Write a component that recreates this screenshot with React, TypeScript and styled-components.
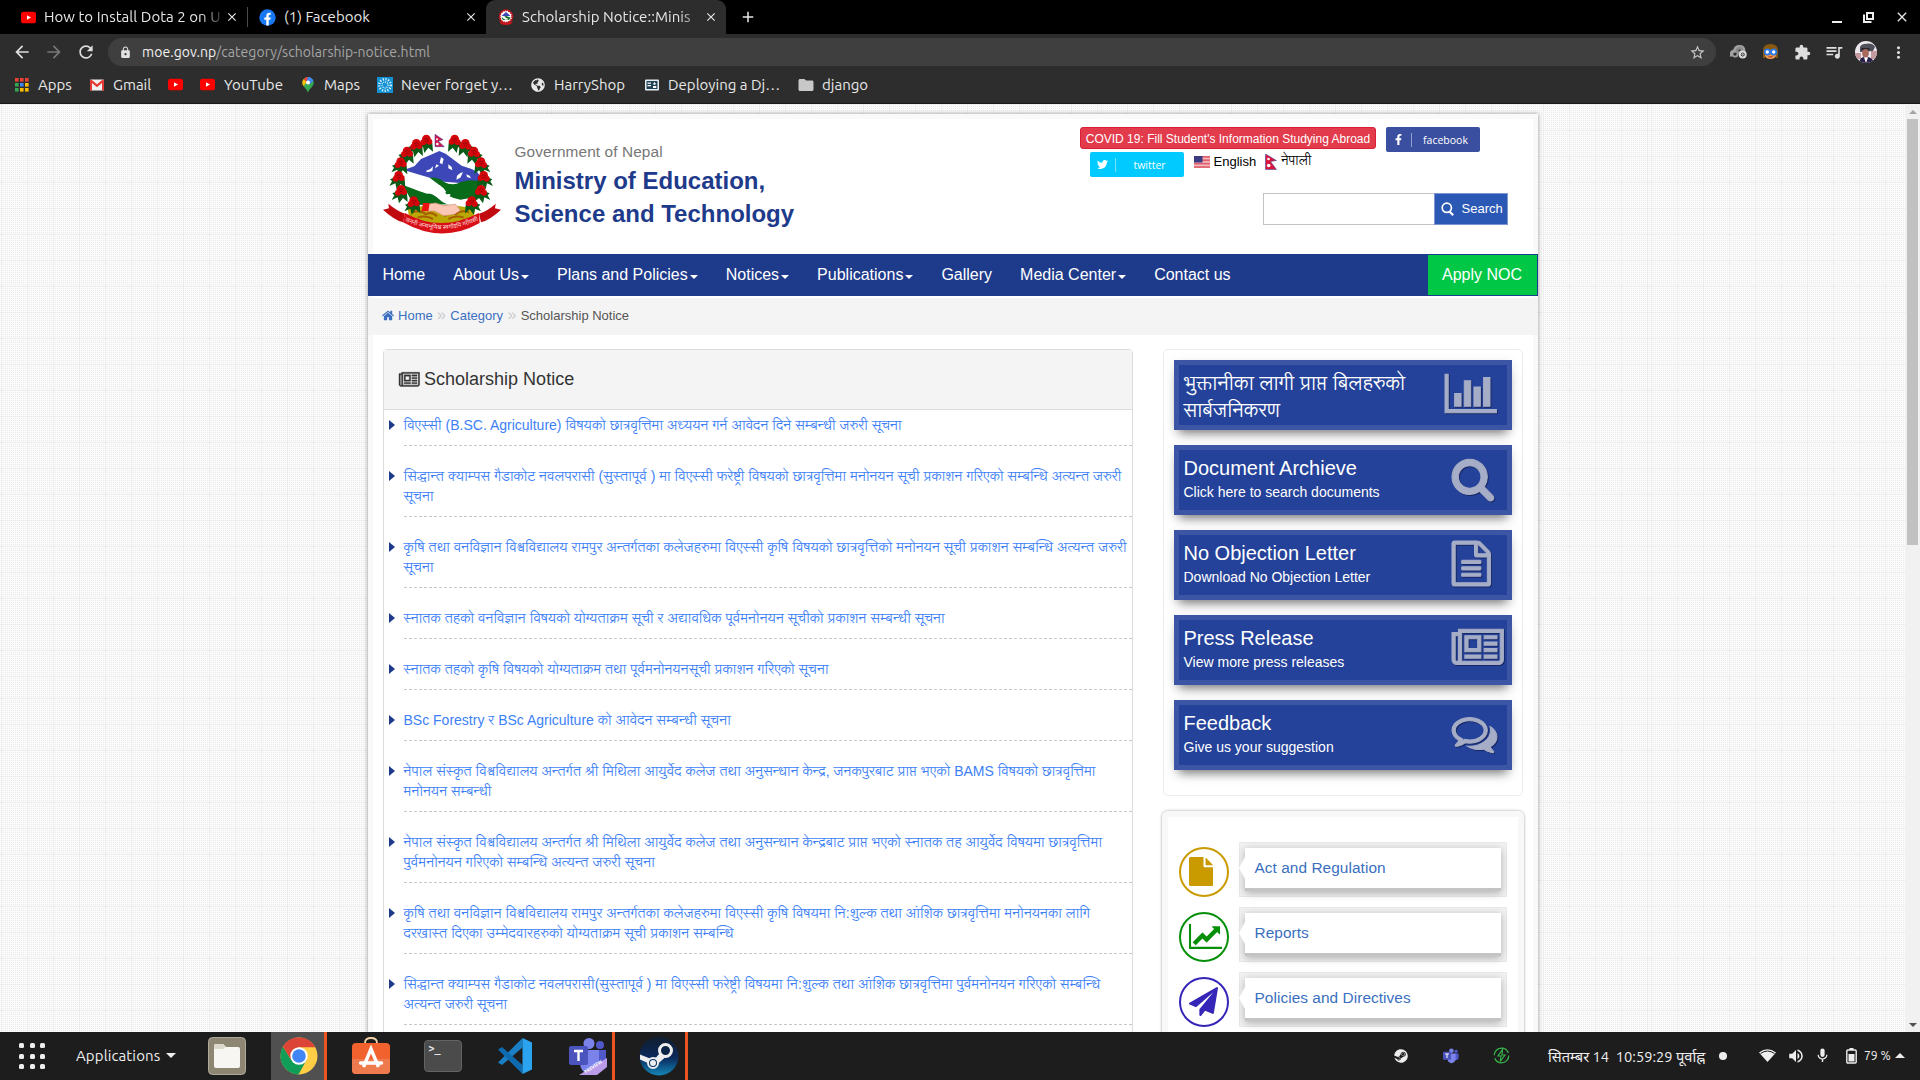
import React from "react";
import styled, { createGlobalStyle, css } from "styled-components";
import { FaTwitter, FaFacebookF, FaGlobeAmericas, FaSteam } from "react-icons/fa";
import {
  MdArrowBack, MdArrowForward, MdRefresh, MdLock, MdStarBorder, MdExtension,
  MdQueueMusic, MdMoreVert, MdClose, MdAdd, MdFolder, MdMic, MdVolumeUp,
} from "react-icons/md";

const Global = createGlobalStyle`
  html, body { margin: 0; padding: 0; background: #fff; overflow: hidden; }
  * { box-sizing: border-box; }
`;
const ui = `"Ubuntu", "Noto Sans", "Noto Sans Devanagari", sans-serif`;
const arial = `"Liberation Sans", Arial, "Lohit Devanagari", "Noto Sans Devanagari", sans-serif`;

const Screen = styled.div`
  width: 1920px; height: 1080px; display: flex; flex-direction: column; overflow: hidden; font-family: ${ui};
  svg { display: block; flex: none; }
`;

/* ---------- browser chrome ---------- */
const TabStrip = styled.div`height: 34px; background: #000; display: flex; align-items: stretch; color: #e6e6e6;`;
const Tab = styled.div<{ $w: number; $active?: boolean; $pl: number }>`
  width: ${p => p.$w}px; display: flex; align-items: center; padding: 0 8px 0 ${p => p.$pl}px; gap: 8px;
  ${p => p.$active && css`background: #2d2d2d; border-radius: 9px 9px 0 0;`}
`;
const TabTitle = styled.div<{ $fade?: boolean }>`
  flex: 1; white-space: nowrap; font-size: 15px; line-height: 20px; margin-right: -8px; letter-spacing: .04px;
  ${p => p.$fade && css`mask-image: linear-gradient(90deg, #000 86%, rgba(0,0,0,.15) 99%);`}
`;
const TabLine = styled.div`width: 1px; height: 20px; background: #4a4a4a; align-self: center;`;
const NewTab = styled.div`width: 44px; display: flex; align-items: center; justify-content: center;`;
const WindowButtons = styled.div`margin-left: auto; width: 89px; display: flex; align-items: center; gap: 20px;`;

const Toolbar = styled.div`height: 36px; background: #2d2d2d; display: flex; align-items: center; color: #dedede; padding-left: 12px;`;
const NavIcons = styled.div`display: flex; gap: 12px; width: 96px;`;
const Omnibox = styled.div`
  width: 1608px; height: 28px; border-radius: 14px; background: #3f3f3f; display: flex; align-items: center; padding: 0 10px 0 11px;
  font-size: 14px; color: #a5a5a5;
`;
const Url = styled.div`margin-left: 10px; flex: 1; letter-spacing: 0.06px; b { font-weight: 400; color: #f0f0f0; }`;
const Extensions = styled.div`display: flex; align-items: center; margin-left: 6px;`;
const ExtCell = styled.div`width: 32px; display: flex; justify-content: center;`;
const Avatar = styled.div`width: 22px; height: 22px; border-radius: 50%; overflow: hidden;`;

const Bookmarks = styled.div`
  height: 34px; background: #2d2d2d; border-bottom: 1px solid #1b181c; display: flex; align-items: center; color: #e8e8e8; padding: 0 0 4px 15px;
`;
const Bookmark = styled.div<{ $w: number; $gap?: number }>`
  width: ${p => p.$w}px; display: flex; align-items: center; gap: ${p => p.$gap ?? 9}px; font-size: 15px; white-space: nowrap;
`;

/* ---------- page ---------- */
const Viewport = styled.div`
  height: 928px; display: flex; overflow: hidden; font-family: ${arial};
`;
const Page = styled.div`
  flex: 1; height: 928px; padding: 10px 0 0 367.5px; overflow: hidden; background-color: #fbfbfb;
  background-image:
    repeating-linear-gradient(90deg, transparent 0 1px, #ededed 1px 2px, transparent 2px 26px),
    repeating-linear-gradient(180deg, #ededed 0 1px, transparent 1px 26px),
    conic-gradient(#ebebeb 25%, transparent 0);
  background-size: 550px 594px, 550px 594px, 2px 2px;
`;
const Wrapper = styled.div`
  width: 1170px; height: 1400px; background: #fff; border: 5px solid #f9f9f9; box-shadow: 0 0 4px rgba(0,0,0,.42);
`;
const Header = styled.div`height: 135px; display: flex; padding: 8px 25px 0 10px;`;
const EmblemBox = styled.div`padding-top: 7px; width: 132px;`;
const Titles = styled.div`padding-top: 15px; width: 565px;`;
const Gov = styled.div`font-size: 15.4px; color: #777; line-height: 20px; letter-spacing: .1px;`;
const Ministry = styled.div`font-size: 24px; font-weight: 700; color: #1e3a8a; line-height: 33px; margin-top: 2px;`;
const HeaderRight = styled.div`flex: 1; display: flex; flex-direction: column;`;
const Line = styled.div<{ $pl?: number }>`display: flex; height: 25px; align-items: flex-start; padding-left: ${p => p.$pl ?? 0}px;`;
const Covid = styled.div`
  width: 296px; height: 22px; background: #e23b4b; border: 1px solid #dc1f37; border-radius: 3px; color: #fff; font-size: 12px;
  line-height: 22px; text-align: center; white-space: nowrap; margin-right: 10px; padding-left: 1px;
`;
const Social = styled.div<{ $bg: string }>`
  width: 94px; height: 25px; background: ${p => p.$bg}; border-radius: 2px; color: #fff; display: flex; align-items: center;
  padding-left: 7px; font: 500 10.5px "Open Sans", "Noto Sans", sans-serif;
  span { flex: 1; text-align: center; border-left: 1px solid rgba(255,255,255,.45); height: 14px; line-height: 14px; margin-left: 7px; }
`;
const Lang = styled.div<{ $ml: number }>`display: flex; align-items: center; gap: 4px; margin-left: ${p => p.$ml}px; font-size: 13px; color: #000; height: 19px;`;
const SearchRow = styled.div`display: flex; margin: 16px 0 0 auto; height: 32px;`;
const SearchInput = styled.div`width: 171px; background: #fff; border: 1px solid #c3c3c3; border-right: 0;`;
const SearchButton = styled.div`
  width: 74px; background: #2b57b5; border: 1px solid #7c97cf; color: #fff; display: flex; align-items: center; padding: 0 0 1px 6px; gap: 8px; font-size: 13px;
`;

const Nav = styled.div`
  height: 42px; margin: 0 -5px; background: #1e3a8a; display: flex; align-items: center; color: #fff; font-size: 16px; padding: 1px;
`;
const NavItem = styled.div`display: flex; align-items: center; padding: 0 14px; gap: 2px; white-space: nowrap;`;
const Caret = styled.div`border: 4px solid transparent; border-top-color: #fff; border-bottom: 0; margin-top: 3px;`;
const Apply = styled.div`margin-left: auto; width: 109px; height: 40px; background: #00c846; display: flex; align-items: center; justify-content: center;`;

const Crumbs = styled.div`
  height: 37px; margin: 2px -5px 0; background: #f4f4f4; display: flex; align-items: center; padding: 0 0 2px 14.5px; font-size: 13px; color: #555;
  a { color: #3a6fc0; }
  i { font-style: normal; color: #ccc; width: 17.6px; text-align: center; font-size: 16px; line-height: 12px; margin-top: -1px; }
  svg { margin-right: 4px; }
`;
const Columns = styled.div`display: flex; padding: 14px 0 0 10px; align-items: flex-start;`;
const Panel = styled.div`width: 750px; height: 1200px; border: 1px solid #dcdcdc; border-radius: 4px 4px 0 0;`;
const PanelHead = styled.div`
  height: 60px; background: #f4f4f4; border-bottom: 1px solid #dcdcdc; display: flex; align-items: center; padding-left: 15px; gap: 5px;
  font-size: 18px; color: #333;
  svg { overflow: visible; stroke: currentColor; stroke-width: 40px; }
`;
const List = styled.div`padding: 5px 0 0 5px;`;
const Item = styled.div`display: flex; align-items: flex-start; margin-bottom: 20px;`;
const Bullet = styled.div`border: 5px solid transparent; border-left: 6px solid #1e3a8a; border-right: 0; margin: 5px 9px 0 0;`;
const ItemText = styled.div`
  flex: 1; border-bottom: 1px dashed #c8c8c8; padding-bottom: 10px; font-size: 14px; line-height: 20px; color: #3d7ff7; white-space: nowrap;
`;

const Side = styled.div`margin-left: 29px; display: flex; flex-direction: column; gap: 15px;`;
const CardsBox = styled.div`
  width: 360px; height: 447px; margin-left: 1px; border: 1px solid #ececec; border-radius: 5px; padding: 10px 10px; display: flex; flex-direction: column; gap: 15px;
`;
const Card = styled.div`
  height: 70px; width: 338px; background: #24429a; border: 5px solid #3c56a5; box-shadow: 0 8px 10px -5px rgba(0,0,0,.5), 0 2px 10px rgba(0,0,0,.08);
  display: flex; color: #fff; padding: 3px 0 0 5px;
`;
const CardText = styled.div<{ $w: number }>`width: ${p => p.$w}px;`;
const CardTitle = styled.div<{ $np?: boolean }>`font-size: 20px; line-height: ${p => (p.$np ? 27 : 28)}px; white-space: nowrap; margin-top: ${p => (p.$np ? 2 : 1)}px;`;
const CardSub = styled.div`font-size: 14px; line-height: 20px;`;
const CardIcon = styled.div`
  padding: 2.5px 0 0 .5px; color: #a6adc6;
  svg { overflow: visible; stroke: currentColor; stroke-width: 40px; filter: drop-shadow(1px 1px 0 rgba(20,30,80,.7)); }
`;

const LinksBox = styled.div`
  width: 362px; height: 400px; border: 6px solid #f8f8f8; border-radius: 6px; box-shadow: 0 0 3px rgba(0,0,0,.38);
  padding: 25px 0 0 11px; display: flex; flex-direction: column; gap: 10px;
`;
const LinkRow = styled.div`display: flex; align-items: flex-start; gap: 10px; height: 55px;`;
const Circle = styled.div<{ $c: string }>`
  width: 50px; height: 50px; border-radius: 50%; border: 2px solid ${p => p.$c}; color: ${p => p.$c}; padding: 8px 0 0 8px; margin-top: 5px;
`;
const LinkFrame = styled.div`width: 268px; height: 55px; background: #f1f1f1; border: 1px solid #e9e9e9; padding: 5px; position: relative;`;
const Notch = styled.div`position: absolute; left: -1px; top: 14px; border: 11px solid transparent; border-left: 0; border-right: 6px solid #fff;`;
const LinkCard = styled.div`
  height: 43px; background: #fff; border-bottom: 3px solid #c4c4c4; box-shadow: 0 2px 8px rgba(0,0,0,.28); font-size: 15.4px; line-height: 40px;
  padding-left: 10px; color: #3a6fc0; letter-spacing: .06px;
`;

const Scrollbar = styled.div`width: 15px; background: #f1f1f1; display: flex; flex-direction: column; align-items: center;`;
const Arrow = styled.div<{ $down?: boolean }>`
  height: 15px; display: flex; align-items: center;
  &::before { content: ""; border: 4px solid transparent; ${p => p.$down ? "border-top-color:#505050;border-bottom:0;" : "border-bottom-color:#a3a3a3;border-top:0;"} }
`;
const Thumb = styled.div`width: 11px; height: 426px; background: #c1c1c1; margin-bottom: auto;`;

/* ---------- taskbar ---------- */
const Taskbar = styled.div`height: 48px; background: #1d1d1d; display: flex; align-items: center; color: #eee; padding-left: 19px;`;
const DotGrid = styled.div`
  width: 27px; display: grid; grid-template-columns: repeat(3, 5px); gap: 5.5px;
  i { width: 5px; height: 5px; border-radius: 1.5px; background: #eee; }
`;
const AppsLabel = styled.div`
  margin-left: 30px; width: 107px; display: flex; align-items: center; gap: 6px; font-size: 15px; letter-spacing: .12px; padding-bottom: 1px;
`;
const Down = styled.div<{ $up?: boolean }>`border: 5px solid transparent; ${p => p.$up ? "border-bottom-color:#eee;border-top:0;" : "border-top-color:#eee;border-bottom:0;"}`;
const Launcher = styled.div<{ $w: number; $run?: boolean; $active?: boolean; $pl?: number }>`
  width: ${p => p.$w}px; height: 48px; display: flex; align-items: center; justify-content: center; padding-left: ${p => p.$pl ?? 0}px;
  background: ${p => (p.$active ? "#505050" : "transparent")}; border-right: 3px solid ${p => (p.$run ? "#e95420" : "transparent")};
`;
const Tray = styled.div`margin-left: auto; display: flex; align-items: center; padding: 0 15px 1px 0;`;
const TrayCell = styled.div<{ $w: number }>`width: ${p => p.$w}px; white-space: nowrap; font-size: 14.67px;`;
const Percent = styled.div`width: 31px; font-size: 12.2px; white-space: nowrap;`;

/* ---------- glyphs ---------- */
const GLYPHS: Record<string, [number, string]> = {
  bars: [2048, "M640 896v512h-256v-512h256zm384-512v1024h-256v-1024h256zm1024 1152v128h-2048v-1536h128v1408h1920zm-640-896v768h-256v-768h256zm384-384v1152h-256v-1152h256z"],
  search: [1664, "M1152 832q0-185-131.5-316.5t-316.5-131.5-316.5 131.5-131.5 316.5 131.5 316.5 316.5 131.5 316.5-131.5 131.5-316.5zm512 832q0 52-38 90t-90 38q-54 0-90-38l-343-342q-179 124-399 124-143 0-273.5-55.5t-225-150-150-225-55.5-273.5 55.5-273.5 150-225 225-150 273.5-55.5 273.5 55.5 225 150 150 225 55.5 273.5q0 220-124 399l343 343q37 37 37 90z"],
  doc: [1536, "M1468 380q28 28 48 76t20 88v1152q0 40-28 68t-68 28h-1344q-40 0-68-28t-28-68v-1600q0-40 28-68t68-28h896q40 0 88 20t76 48zm-444-244v376h376q-10-29-22-41l-313-313q-12-12-41-22zm384 1528v-1024h-416q-40 0-68-28t-28-68v-416h-768v1536h1280zm-1024-864q0-14 9-23t23-9h704q14 0 23 9t9 23v64q0 14-9 23t-23 9h-704q-14 0-23-9t-9-23v-64zm736 224q14 0 23 9t9 23v64q0 14-9 23t-23 9h-704q-14 0-23-9t-9-23v-64q0-14 9-23t23-9h704zm0 256q14 0 23 9t9 23v64q0 14-9 23t-23 9h-704q-14 0-23-9t-9-23v-64q0-14 9-23t23-9h704z"],
  news: [2048, "M1024 512h-384v384h384v-384zm128 640v128h-640v-128h640zm0-768v640h-640v-640h640zm640 768v128h-512v-128h512zm0-256v128h-512v-128h512zm0-256v128h-512v-128h512zm0-256v128h-512v-128h512zm-1536 960v-960h-128v960q0 26 19 45t45 19 45-19 19-45zm1664 0v-1088h-1536v1088q0 33-11 64h1483q26 0 45-19t19-45zm128-1216v1216q0 80-56 136t-136 56h-1664q-80 0-136-56t-56-136v-1088h256v-128h1792z"],
  chat: [1792, "M704 384q-153 0-286 52t-211.5 141-78.5 191q0 82 53 158t149 132l97 56-35 84q34-20 62-39l44-31 53 10q78 14 153 14 153 0 286-52t211.5-141 78.5-191-78.5-191-211.5-141-286-52zm0-128q191 0 353.5 68.5t256.5 186.5 94 257-94 257-256.5 186.5-353.5 68.5q-86 0-176-16-124 88-278 128-36 9-86 16h-3q-11 0-20.5-8t-11.5-21q-1-3-1-6.5t.5-6.5 2-6l2.5-5 3.5-5.5 4-5 4.5-5 4-4.5q5-6 23-25t26-29.5 22.5-29 25-38.5 20.5-44q-124-72-195-177t-71-224q0-139 94-257t256.5-186.5 353.5-68.5zm822 1169q10 24 20.5 44t25 38.5 22.5 29 26 29.5 23 25q1 1 4 4.5t4.5 5 4 5 3.500 5.500l2.500 5 2 6 .5 6.500-1 6.500q-3 14-13 22t-22 7q-50-7-86-16-154-40-278-128-90 16-176 16-271 0-472-132 58 4 88 4 161 0 309-45t264-129q125-92 192-212t67-254q0-77-23-152 129 71 204 178t75 230q0 120-71 224.500t-195 176.500z"],
  line: [2048, "M2048 1536v128h-2048v-1536h128v1408h1920zm-128-1248v435q0 21-19.500 29.500t-35.500-7.500l-121-121-633 633q-10 10-23 10t-23-10l-233-233-416 416-192-192 585-585q10-10 23-10t23 10l233 233 464-464-121-121q-16-16-7.500-35.500t29.500-19.500h435q14 0 23 9t9 23z"],
  plane: [1792, "M1764 11q33 24 27 64l-256 1536q-5 29-32 45-14 8-31 8-11 0-24-5l-453-185-242 295q-18 23-49 23-13 0-22-4-19-7-30.500-23.500t-11.500-36.500v-349l864-1059-1069 925-395-162q-37-14-40-55-2-40 32-59l1664-960q15-9 32-9 20 0 36 11z"],
  file: [1536, "M1024 512v-472q22 14 36 28l408 408q14 14 28 36h-472zm-128 32q0 40 28 68t68 28h544v1056q0 40-28 68t-68 28h-1344q-40 0-68-28t-28-68v-1600q0-40 28-68t68-28h800v544z"],
  home: [1664, "M1408 992v480q0 26-19 45t-45 19h-384v-384h-256v384h-384q-26 0-45-19t-19-45v-480q0-1 .5-3t.5-3l575-474 575 474q1 2 1 6zm223-69l-62 74q-8 9-21 11h-3q-13 0-21-7l-692-577-692 577q-12 8-24 7-13-2-21-11l-62-74q-8-10-7-23.5t11-21.5l719-599q32-26 76-26t76 26l244 204v-195q0-14 9-23t23-9h192q14 0 23 9t9 23v408l219 182q10 8 11 21.5t-7 23.5z"],
};
const Glyph = ({ name, size, color = "currentColor" }: { name: string; size: number; color?: string }) => {
  const [w, d] = GLYPHS[name];
  return <svg width={(w * size) / 1792} height={size} viewBox={`0 0 ${w} 1792`} fill={color}><path d={d} /></svg>;
};

const flowers: [number, number][] = [
  [148, 44], [118, 57], [90, 80], [71, 112], [65, 153], [72, 195], [110, 229],
  [233, 44], [265, 57], [291, 80], [312, 112], [320, 153], [312, 195], [284, 229],
];
const Emblem = ({ w = 118, h = 100 }: { w?: number; h?: number }) => (
  <svg width={w} height={h} viewBox="18 27 354 300">
    <path d="M80 135 L112 124 L132 102 L160 90 L187 78 L206 86 L230 104 L254 122 L284 132 L300 140 L318 165 L300 178 L200 170 L130 150 Z" fill="#3d47b8" />
    <path d="M192 96l8 6-4 16-8-4zM146 138l14-6 8-8-2 14-14 4zM214 118l10 8 2 10-12-6zM240 152l10-8 8-2-8 16-12 6zM268 148l10 4 4 8-12-4zM178 118l8 4-12 8z" fill="#fff" />
    <path d="M158 158 Q182 156 200 170 Q226 184 250 172 Q280 160 316 170 L310 215 L262 236 L218 216 L200 190 Z" fill="#076b1a" />
    <path d="M78 180 Q120 196 150 206 L216 200 L224 238 L110 240 Z" fill="#076b1a" />
    <path d="M96 180 Q112 164 128 158 Q146 150 152 166 Q166 182 188 180 Q204 196 208 208 Q226 204 218 214 Q232 222 250 224 L284 218 L276 244 L236 240 Q206 242 190 226 Q168 204 140 202 Q112 196 96 180Z" fill="#fff" />
    <path d="M92 250 Q190 232 294 250 L290 288 Q190 318 98 288 Z" fill="#b9a806" />
    <path d="M106 262q26-8 40 6q18-10 34 6M276 262q-26-8-40 6q-18-10-34 6M122 278q24-8 46 4M260 278q-24-8-46 4" fill="none" stroke="#a85d00" strokeWidth="6" />
    <path d="M150 238 L176 234 L200 242 L236 238 L250 256 L232 268 L200 272 L172 258 L150 258Z" fill="#fbc7b5" stroke="#d98f7c" strokeWidth="2" />
    <path d="M138 234h20l-4 24h-20z" fill="#e11" />
    {flowers.map(([x, y], i) => {
      const s = x < 190 ? -1 : 1;
      return (
        <g key={i}>
          <path d={`M${x} ${y}l${s * 26} 10l${-s * 6} 6l${s * 8} 14l${-s * 18} -8l${-s * 4} 18l${-s * 12} -16l${-s * 14} 12l${s * 2} -26z`} fill="#0a5a18" />
          <circle cx={x} cy={y - 2} r="13" fill="#d3060c" />
          <circle cx={x + s * 9} cy={y + 8} r="9" fill="#d3060c" />
          <circle cx={x - s * 9} cy={y + 6} r="9" fill="#d3060c" />
          <path d={`M${x - 7} ${y}q7-8 14 0M${x - 4} ${y + 6}q5-5 9 0`} stroke="#8d0308" strokeWidth="2.5" fill="none" />
        </g>
      );
    })}
    <path d="M174 28 L198 44 L184 49 L202 65 L174 65Z" fill="#d5174e" stroke="#35318f" strokeWidth="1.5" />
    <circle cx="181" cy="57" r="4" fill="#fff" /><circle cx="180" cy="43" r="3" fill="#fff" />
    <path d="M18 254 L36 250 L34 236 Q60 258 84 266 L78 292 Q50 284 18 254Z" fill="#c10a10" />
    <path d="M372 254 L354 250 L356 236 Q332 258 306 266 L312 292 Q340 284 372 254Z" fill="#c10a10" />
    <path d="M84 264 Q190 324 306 264 L308 294 Q194 358 78 292Z" fill="#d80f16" />
    <defs><path id="ribbon" d="M84 288 Q194 338 304 286" /></defs>
    <text fontSize="18" fill="#ffdada" fontFamily="Noto Sans Devanagari, sans-serif" textAnchor="middle">
      <textPath href="#ribbon" startOffset="50%">जननी जन्मभूमिश्च स्वर्गादपि गरीयसी</textPath>
    </text>
  </svg>
);
const EmblemMini = () => (
  <svg width="16" height="16" viewBox="0 0 16 16">
    <circle cx="8" cy="7.500" r="6.300" fill="#fff" stroke="#c5141b" strokeWidth="2" strokeDasharray="2 .6" />
    <path d="M3.500 7L8 3l4.500 4z" fill="#3d47b8" /><path d="M3.500 8.500L8 7l4.500 1.500L11 11H5z" fill="#0a6a1d" />
    <path d="M4 8q3-1.500 4 1l3 1-3 1q-3-1-4-3z" fill="#fff" /><path d="M1 12q7 4 14 0l-2 3q-5 2-10 0z" fill="#d0141b" />
  </svg>
);

const YouTube = ({ s = 15 }: { s?: number }) => (
  <svg width={s} height={s} viewBox="0 0 15 15"><rect y="1.700" width="15" height="11.600" rx="2.600" fill="#f00" /><path d="M6 5.200v4.600l4-2.300z" fill="#fff" /></svg>
);
const FbRound = () => (
  <svg width="17" height="17" viewBox="0 0 17 17"><circle cx="8.5" cy="8.5" r="8.2" fill="#1877f2" />
    <path d="M7.3 16.6v-5.9H5.3V8.4h2V6.7c0-2 1.2-3 3-3 .8 0 1.5.1 1.5.1v1.9h-.9c-.9 0-1.2.6-1.2 1.1v1.6h2.1l-.4 2.3H9.700v5.900z" fill="#fff" /></svg>
);
const AppsGrid = () => (
  <svg width="14" height="14" viewBox="0 0 14 14">
    {["#ea4335", "#ea4335", "#ea4335", "#34a853", "#4285f4", "#fbbc05", "#34a853", "#fbbc05", "#fbbc05"].map((c, i) => (
      <rect key={i} x={(i % 3) * 5} y={Math.floor(i / 3) * 5} width="3.6" height="3.6" fill={c} />
    ))}
  </svg>
);
const Gmail = () => (
  <svg width="14" height="14" viewBox="0 0 14 14"><rect y="1.500" width="14" height="11" rx="1" fill="#f2f2f2" />
    <path d="M0 2.500V12.500H2V5l5 4.200L12 5v7.500h2V2.500L12.800 1.500 7 6.200 1.200 1.500z" fill="#e53935" /></svg>
);
const MapsPin = () => (
  <svg width="12" height="16" viewBox="0 0 12 16">
    <path d="M6 16C5.500 12 .3 9.800.3 5.700A5.700 5.700 0 0 1 6 0a5.700 5.700 0 0 1 5.700 5.700C11.700 9.800 6.500 12 6 16z" fill="#34a853" />
    <path d="M.3 5.700A5.700 5.700 0 0 1 1.700 2l3 2.700L1.800 9C.9 8 .3 7 .3 5.700z" fill="#fbbc04" />
    <path d="M1.600 2.100A5.700 5.700 0 0 1 6 0v3.500L4.500 5z" fill="#ea4335" />
    <path d="M6 0a5.700 5.700 0 0 1 5.400 3.900L7 7.500 4.500 4.500z" fill="#4285f4" /><circle cx="6" cy="5.600" r="2" fill="#fff" />
  </svg>
);
const Burst = () => (
  <svg width="16" height="16" viewBox="0 0 16 16"><rect width="16" height="16" fill="#1292d4" />
    <circle cx="8" cy="8" r="5.800" fill="none" stroke="#d9f1fb" strokeWidth="2.400" strokeDasharray="1.200 1.500" />
    <circle cx="8" cy="8" r="3" fill="none" stroke="#d9f1fb" strokeWidth="1.400" strokeDasharray="1 1" /></svg>
);
const DocMark = () => (
  <svg width="14" height="14" viewBox="0 0 14 14"><rect y="1.500" width="14" height="11" rx="1" fill="#e8f0f5" />
    <rect x="1.500" y="3" width="11" height="8" fill="#1f4257" /><path d="M2.500 4.500h3.500v1.300H2.500zM2.500 7h3.500v1.300H2.500zM9.500 4l1.500 2-1.500 1L8 6zM8 8h3.300v2H8z" fill="#fff" /></svg>
);
const Restore = () => (
  <svg width="11" height="11" viewBox="0 0 11 11" fill="none" stroke="#eee" strokeWidth="2"><rect x="4" y="1" width="6" height="6" /><path d="M1 2.500V10H8.500" /></svg>
);
const ExtGears = () => (
  <svg width="17" height="14" viewBox="0 0 17 14" fill="none" stroke="#a0a0a0">
    <path d="M1.500 11.500Q0 6 4.500 6q.5-4.500 5-4.500T14 6" strokeWidth="2.800" /><circle cx="5" cy="9" r="2.600" strokeWidth="1.800" /><circle cx="9.500" cy="5.500" r="2.200" stroke="#8a8a8a" strokeWidth="2.400" /><circle cx="12.700" cy="9.500" r="3" stroke="#dcdcdc" strokeWidth="2" /><circle cx="12.700" cy="9.500" r=".8" stroke="#dcdcdc" />
  </svg>
);
const ExtFace = () => (
  <svg width="15" height="16" viewBox="0 0 15 16"><rect x="1.500" y="3" width="12" height="12" rx="5" fill="#e8994d" />
    <path d="M0 14V7Q0 0 7.500 0T15 7v7l-2 0V6.500L2 6v8z" fill="#8a5a10" /><circle cx="4.300" cy="8" r="2.600" fill="#fff" stroke="#2979e8" strokeWidth="1.800" /><circle cx="10.700" cy="8" r="2.600" fill="#fff" stroke="#2979e8" strokeWidth="1.800" />
    <path d="M5.500 12.800h4" stroke="#a33" /></svg>
);
const Face = () => (
  <svg width="22" height="22" viewBox="0 0 22 22"><rect width="22" height="22" fill="#ece8ee" /><path d="M0 12h6v6H0zM16 10h6v8h-6z" fill="#c39a9f" />
    <path d="M5 9q-1-5 4-6 9-2 11 3l-2 4-13 1z" fill="#50505a" /><ellipse cx="10.500" cy="12" rx="3.400" ry="4.800" fill="#a86a5c" /><path d="M6.500 10q4-4 8 0v-3h-8z" fill="#2b2430" />
    <path d="M4 22q1-6 5-6l2 2 2-2q5 1 6 6z" fill="#2a2148" /><path d="M9 16.500l2 5.500 2-5.500z" fill="#fff" /></svg>
);
const UsFlag = () => (
  <svg width="16" height="12" viewBox="0 0 16 12"><rect width="16" height="12" fill="#f3b9bf" />
    {[0, 3.400, 6.800, 10.200].map(y => <rect key={y} y={y} width="16" height="1.700" fill="#e2606d" />)}<rect width="8.500" height="6.500" fill="#3c3b82" /></svg>
);
const NpFlag = () => (
  <svg width="12" height="16" viewBox="0 0 12 16"><path d="M.5 0L11.500 6.500 5.500 7.500 11.500 15.500H.5z" fill="#dc143c" stroke="#23409a" strokeWidth=".5" />
    <circle cx="3.500" cy="5" r="1.300" fill="#fff" /><circle cx="3.700" cy="11.500" r="1.800" fill="#fff" /></svg>
);
const Magnifier = () => (
  <svg width="13" height="14" viewBox="0 0 13 14" fill="none" stroke="#fff"><circle cx="5.800" cy="5.800" r="4.600" strokeWidth="1.700" /><path d="M8.500 9.500l3.700 3.700" strokeWidth="2.200" /></svg>
);
const Files = () => (
  <svg width="38" height="38" viewBox="0 0 38 38"><rect x=".5" y=".5" width="37" height="37" rx="4" fill="#8d8672" stroke="#b0aa98" />
    <path d="M6 9q0-2 2-2h7l3 3h12q2 0 2 2v17q0 2-2 2H8q-2 0-2-2z" fill="#f7f6f3" /><path d="M6 9q0-2 2-2h7l3 3-3 2H6z" fill="#ddd8cc" /></svg>
);
const Chrome = () => (
  <svg width="38" height="38" viewBox="0 0 38 38"><circle cx="19" cy="19" r="18.500" fill="#ffce44" />
    <path d="M3 9.700A18.500 18.500 0 0 0 18.500 37.500L26.500 23 19 19 11.300 23z" fill="#0f9d58" />
    <path d="M3 9.700l8 13 2-10 6-2.400h16.300A18.500 18.500 0 0 0 3 9.700z" fill="#db4437" />
    <circle cx="19" cy="19" r="8.700" fill="#fff" /><circle cx="19" cy="19" r="6.800" fill="#4285f4" /></svg>
);
const Software = () => (
  <svg width="38" height="38" viewBox="0 0 38 38"><path d="M13 9V6q0-5 6-5t6 5v3" fill="none" stroke="#f2d3a8" strokeWidth="1.800" />
    <rect y="6" width="38" height="31" rx="4" fill="#f2622e" /><path d="M0 22h38v11q0 4-4 4H4q-4 0-4-4z" fill="#ee7a4d" />
    <path d="M11.500 30L19 12l7.500 18" fill="none" stroke="#fff" strokeWidth="3.400" /><path d="M8.500 26h21" stroke="#fff" strokeWidth="3.400" strokeLinecap="round" /></svg>
);
const TermText = styled.div`
  width: 38px; height: 32px; border-radius: 4px; background: #4b4b4b; border: 1px solid #636363; color: #e8e8e8;
  font: 700 10px/15px "DejaVu Sans Mono", monospace; padding-left: 4px;
`;
const VsCode = () => (
  <svg width="36" height="36" viewBox="0 0 36 36">
    <path d="M25.500 9.500L5 27 1 24.500 25.500 0z" fill="#1b7fc6" /><path d="M25.500 27L5 9 1 11.500 25.500 36z" fill="#0f6bb0" />
    <path d="M25.500 0L35 4.500v27L25.500 36z" fill="#2ba3ee" /></svg>
);
const Teams = ({ s = 38, p = true }: { s?: number; p?: boolean }) => (
  <svg width={s} height={s} viewBox="0 0 38 38"><circle cx="31" cy="8" r="4" fill="#5059c9" /><path d="M25 13h12v12q-3 5-9 4z" fill="#5059c9" />
    <circle cx="20" cy="6.500" r="5.500" fill="#7b83eb" /><path d="M11 13h19v14q-2 9-10 9t-9-9z" fill="#7b83eb" />
    <rect y="9" width="19" height="19" rx="2" fill="#4b53bc" /><path d="M5 14h9M9.500 14v10" stroke="#fff" strokeWidth="2.400" />
    {p && <path d="M38 21v9l-10 8H10z" fill="#b99be8" />}
    {p && <text x="16.500" y="36.500" fontSize="4.600" fontWeight="700" fill="#fff" transform="rotate(-33 16.500 36.500)" fontFamily="Noto Sans">PREVIEW</text>}
  </svg>
);
const Steam = () => (
  <svg width="40" height="40" viewBox="0 0 40 40"><defs><linearGradient id="st" x1="0" y1="0" x2="0" y2="1"><stop offset="0" stopColor="#111d2e" /><stop offset=".55" stopColor="#0a2a5c" /><stop offset="1" stopColor="#1387b8" /></linearGradient></defs>
    <circle cx="20" cy="20" r="19.500" fill="url(#st)" /><path d="M1 23.500l9 4 8 1 8-7 3-4-5-4-7 8-6 1-10-4z" fill="#eee" />
    <circle cx="14" cy="27" r="5" fill="#0b3566" stroke="#eee" strokeWidth="2" /><circle cx="14" cy="27" r="3" fill="#eee" /><circle cx="26.500" cy="14.500" r="6" fill="#0a2347" stroke="#eee" strokeWidth="3" /></svg>
);
const Wifi = () => <svg width="17" height="13" viewBox="0 0 17 13"><path d="M0 3.500Q8.500-3 17 3.500L8.500 13z" fill="#eee" /><path d="M1.500 4.500Q8.500-.5 15.500 4.500" fill="none" stroke="#1d1d1d" strokeWidth="1" /></svg>;
const Battery = () => <svg width="11" height="16" viewBox="0 0 11 16"><path d="M3.500 0h4v2h-4z" fill="#eee" /><rect x=".8" y="2" width="9.400" height="13" rx="1" fill="none" stroke="#eee" strokeWidth="1.400" /><rect x="2.500" y="6" width="6" height="7.500" fill="#eee" /></svg>;
const Bolt = () => <svg width="17" height="17" viewBox="0 0 17 17"><circle cx="8.500" cy="8.500" r="7.300" fill="none" stroke="#37b34a" strokeWidth="1.300" strokeDasharray="20 3" /><path d="M9.500 2.500L5 9h3l-.8 5.500L12 8H9z" fill="none" stroke="#37b34a" strokeWidth="1.200" /></svg>;

/* ---------- content ---------- */
const menu: [string, boolean][] = [
  ["Home", false], ["About Us", true], ["Plans and Policies", true], ["Notices", true],
  ["Publications", true], ["Gallery", false], ["Media Center", true], ["Contact us", false],
];
const notices: string[][] = [
  ["विएस्सी (B.SC. Agriculture) विषयको छात्रवृत्तिमा अध्ययन गर्न आवेदन दिने सम्बन्धी जरुरी सूचना"],
  ["सिद्धान्त क्याम्पस गैडाकोट नवलपरासी (सुस्तापूर्व ) मा विएस्सी फरेष्ट्री विषयको छात्रवृत्तिमा मनोनयन सूची प्रकाशन गरिएको सम्बन्धि अत्यन्त जरुरी", "सूचना"],
  ["कृषि तथा वनविज्ञान विश्वविद्यालय रामपुर अन्तर्गतका कलेजहरुमा विएस्सी कृषि विषयको छात्रवृत्तिको मनोनयन सूची प्रकाशन सम्बन्धि अत्यन्त जरुरी", "सूचना"],
  ["स्नातक तहको वनविज्ञान विषयको योग्यताक्रम सूची र अद्यावधिक पूर्वमनोनयन सूचीको प्रकाशन सम्बन्धी सूचना"],
  ["स्नातक तहको कृषि विषयको योग्यताक्रम तथा पूर्वमनोनयनसूची प्रकाशन गरिएको सूचना"],
  ["BSc Forestry र BSc Agriculture को आवेदन सम्बन्धी सूचना"],
  ["नेपाल संस्कृत विश्वविद्यालय अन्तर्गत श्री मिथिला आयुर्वेद कलेज तथा अनुसन्धान केन्द्र, जनकपुरबाट प्राप्त भएको BAMS विषयको छात्रवृत्तिमा", "मनोनयन सम्बन्धी"],
  ["नेपाल संस्कृत विश्वविद्यालय अन्तर्गत श्री मिथिला आयुर्वेद कलेज तथा अनुसन्धान केन्द्रबाट प्राप्त भएको स्नातक तह आयुर्वेद विषयमा छात्रवृत्तिमा", "पुर्वमनोनयन गरिएको सम्बन्धि अत्यन्त जरुरी सूचना"],
  ["कृषि तथा वनविज्ञान विश्वविद्यालय रामपुर अन्तर्गतका कलेजहरुमा विएस्सी कृषि विषयमा नि:शुल्क तथा आंशिक छात्रवृत्तिमा मनोनयनका लागि", "दरखास्त दिएका उम्मेदवारहरुको योग्यताक्रम सूची प्रकाशन सम्बन्धि"],
  ["सिद्धान्त क्याम्पस गैडाकोट नवलपरासी(सुस्तापूर्व ) मा विएस्सी फरेष्ट्री विषयमा नि:शुल्क तथा आंशिक छात्रवृत्तिमा पुर्वमनोनयन गरिएको सम्बन्धि", "अत्यन्त जरुरी सूचना"],
];
const cards: [string, string, string][] = [
  ["Document Archieve", "Click here to search documents", "search"],
  ["No Objection Letter", "Download No Objection Letter", "doc"],
  ["Press Release", "View more press releases", "news"],
  ["Feedback", "Give us your suggestion", "chat"],
];
const links: [string, string, string][] = [
  ["Act and Regulation", "file", "#c99b00"], ["Reports", "line", "#078f0a"], ["Policies and Directives", "plane", "#3626b8"],
];

export default function App() {
  return (
    <Screen>
      <Global />
      <TabStrip>
        <Tab $w={247} $pl={21}><YouTube /><TabTitle $fade>How to Install Dota 2 on U</TabTitle><MdClose size={14} /></Tab>
        <TabLine />
        <Tab $w={238} $pl={11}><FbRound /><TabTitle>(1) Facebook</TabTitle><MdClose size={14} /></Tab>
        <Tab $w={240} $pl={12} $active><EmblemMini /><TabTitle $fade>Scholarship Notice::Minis</TabTitle><MdClose size={14} /></Tab>
        <NewTab><MdAdd size={18} /></NewTab>
        <WindowButtons>
          <svg width="12" height="11" viewBox="0 0 12 11"><path d="M1 9h10v2H1z" fill="#eee" /></svg>
          <Restore />
          <MdClose size={16} />
        </WindowButtons>
      </TabStrip>
      <Toolbar>
        <NavIcons><MdArrowBack size={20} /><MdArrowForward size={20} color="#777" /><MdRefresh size={20} /></NavIcons>
        <Omnibox><MdLock size={13} color="#e2e2e2" /><Url><b>moe.gov.np</b>/category/scholarship-notice.html</Url><MdStarBorder size={17} color="#c8c8c8" /></Omnibox>
        <Extensions>
          <ExtCell><ExtGears /></ExtCell>
          <ExtCell><ExtFace /></ExtCell>
          <ExtCell><MdExtension size={17} /></ExtCell>
          <ExtCell><MdQueueMusic size={20} /></ExtCell>
          <ExtCell><Avatar><Face /></Avatar></ExtCell>
          <ExtCell><MdMoreVert size={19} /></ExtCell>
        </Extensions>
      </Toolbar>
      <Bookmarks>
        <Bookmark $w={75} $gap={9}><AppsGrid />Apps</Bookmark>
        <Bookmark $w={78}><Gmail />Gmail</Bookmark>
        <Bookmark $w={32}><YouTube /></Bookmark>
        <Bookmark $w={102}><YouTube />YouTube</Bookmark>
        <Bookmark $w={75} $gap={10}><MapsPin />Maps</Bookmark>
        <Bookmark $w={154} $gap={8}><Burst />Never forget y…</Bookmark>
        <Bookmark $w={114} $gap={9}><FaGlobeAmericas size={14} />HarryShop</Bookmark>
        <Bookmark $w={152}><DocMark />Deploying a Dj…</Bookmark>
        <Bookmark $w={90} $gap={7}><MdFolder size={18} color="#c8c8c8" />django</Bookmark>
      </Bookmarks>

      <Viewport>
        <Page>
          <Wrapper>
            <Header>
              <EmblemBox><Emblem /></EmblemBox>
              <Titles>
                <Gov>Government of Nepal</Gov>
                <Ministry>Ministry of Education,<br />Science and Technology</Ministry>
              </Titles>
              <HeaderRight>
                <Line>
                  <Covid>COVID 19: Fill Student's Information Studying Abroad</Covid>
                  <Social $bg="#3b4fa0"><FaFacebookF size={11} /><span>facebook</span></Social>
                </Line>
                <Line $pl={10}>
                  <Social $bg="#00caff"><FaTwitter size={11} /><span>twitter</span></Social>
                  <Lang $ml={10}><UsFlag />English</Lang>
                  <Lang $ml={9}><NpFlag />नेपाली</Lang>
                </Line>
                <SearchRow><SearchInput /><SearchButton><Magnifier />Search</SearchButton></SearchRow>
              </HeaderRight>
            </Header>
            <Nav>
              {menu.map(([t, c]) => <NavItem key={t}>{t}{c && <Caret />}</NavItem>)}
              <Apply>Apply NOC</Apply>
            </Nav>
            <Crumbs><Glyph name="home" size={13} color="#3a6fc0" /><a>Home</a><i>»</i><a>Category</a><i>»</i>Scholarship Notice</Crumbs>
            <Columns>
              <Panel>
                <PanelHead><Glyph name="news" size={18} />Scholarship Notice</PanelHead>
                <List>
                  {notices.map((n, i) => (
                    <Item key={i}><Bullet /><ItemText>{n.map(l => <div key={l}>{l}</div>)}</ItemText></Item>
                  ))}
                </List>
              </Panel>
              <Side>
                <CardsBox>
                  <Card>
                    <CardText $w={261}><CardTitle $np>भुक्तानीका लागी प्राप्त बिलहरुको<br />सार्बजनिकरण</CardTitle></CardText>
                    <CardIcon><Glyph name="bars" size={45} /></CardIcon>
                  </Card>
                  {cards.map(([t, s, g]) => (
                    <Card key={t}>
                      <CardText $w={268}><CardTitle>{t}</CardTitle><CardSub>{s}</CardSub></CardText>
                      <CardIcon><Glyph name={g} size={45} /></CardIcon>
                    </Card>
                  ))}
                </CardsBox>
                <LinksBox>
                  {links.map(([t, g, c]) => (
                    <LinkRow key={t}>
                      <Circle $c={c}><Glyph name={g} size={29} /></Circle>
                      <LinkFrame><LinkCard>{t}</LinkCard><Notch /></LinkFrame>
                    </LinkRow>
                  ))}
                </LinksBox>
              </Side>
            </Columns>
          </Wrapper>
        </Page>
        <Scrollbar><Arrow /><Thumb /><Arrow $down /></Scrollbar>
      </Viewport>

      <Taskbar>
        <DotGrid>{Array.from({ length: 9 }, (_, i) => <i key={i} />)}</DotGrid>
        <AppsLabel>Applications<Down /></AppsLabel>
        <Launcher $w={88} $pl={2}><Files /></Launcher>
        <Launcher $w={56} $active $run $pl={3}><Chrome /></Launcher>
        <Launcher $w={91}><Software /></Launcher>
        <Launcher $w={50} $pl={2}><TermText>&gt;_</TermText></Launcher>
        <Launcher $w={96}><VsCode /></Launcher>
        <Launcher $w={51} $run><Teams /></Launcher>
        <Launcher $w={73} $run $pl={18}><Steam /></Launcher>
        <Tray>
          <TrayCell $w={49}><FaSteam size={14} /></TrayCell>
          <TrayCell $w={50}><Teams s={16} p={false} /></TrayCell>
          <TrayCell $w={55}><Bolt /></TrayCell>
          <TrayCell $w={171}>सितम्बर 14&nbsp; 10:59:29 पूर्वाह्न</TrayCell>
          <TrayCell $w={40}><svg width="8" height="8"><circle cx="4" cy="4" r="4" fill="#eee" /></svg></TrayCell>
          <TrayCell $w={28}><Wifi /></TrayCell>
          <TrayCell $w={27}><MdVolumeUp size={18} /></TrayCell>
          <TrayCell $w={32}><MdMic size={17} /></TrayCell>
          <TrayCell $w={18}><Battery /></TrayCell>
          <Percent>79 %</Percent>
          <Down $up />
        </Tray>
      </Taskbar>
    </Screen>
  );
}
